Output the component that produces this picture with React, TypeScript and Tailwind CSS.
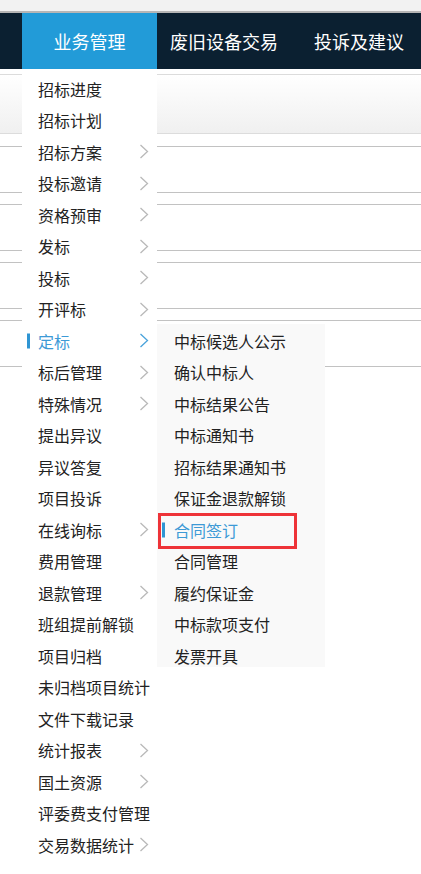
import React from 'react';

const font = '"Microsoft YaHei", "Noto Sans CJK SC", "Noto Sans", sans-serif';

type Item = { label: string; more?: boolean; active?: boolean };

const menu: Item[] = [
  { label: '招标进度' },
  { label: '招标计划' },
  { label: '招标方案', more: true },
  { label: '投标邀请', more: true },
  { label: '资格预审', more: true },
  { label: '发标', more: true },
  { label: '投标', more: true },
  { label: '开评标', more: true },
  { label: '定标', more: true, active: true },
  { label: '标后管理', more: true },
  { label: '特殊情况', more: true },
  { label: '提出异议' },
  { label: '异议答复' },
  { label: '项目投诉' },
  { label: '在线询标', more: true },
  { label: '费用管理' },
  { label: '退款管理', more: true },
  { label: '班组提前解锁' },
  { label: '项目归档' },
  { label: '未归档项目统计' },
  { label: '文件下载记录' },
  { label: '统计报表', more: true },
  { label: '国土资源', more: true },
  { label: '评委费支付管理' },
  { label: '交易数据统计', more: true },
];

const subMenu: Item[] = [
  { label: '中标候选人公示' },
  { label: '确认中标人' },
  { label: '中标结果公告' },
  { label: '中标通知书' },
  { label: '招标结果通知书' },
  { label: '保证金退款解锁' },
  { label: '合同签订', active: true },
  { label: '合同管理' },
  { label: '履约保证金' },
  { label: '中标款项支付' },
  { label: '发票开具' },
];

function Chevron({ active }: { active?: boolean }) {
  return (
    <svg width="10" height="15" viewBox="0 0 10 15" className="shrink-0">
      <polyline
        points="1.5,1 8.5,7.5 1.5,14"
        fill="none"
        stroke={active ? '#4aa3db' : '#b9b9b9'}
        strokeWidth="1.3"
      />
    </svg>
  );
}

function MenuRow({ item, sub }: { item: Item; sub?: boolean }) {
  return (
    <div className={`relative flex h-[31.5px] items-center ${sub ? 'pl-[17px]' : 'pl-[16px] pr-[8px]'}`}>
      {item.active && (
        <span className={`absolute top-1/2 h-[15px] w-[3px] -translate-y-1/2 bg-[#2f95d3] ${sub ? 'left-[5px]' : 'left-[5px]'}`} />
      )}
      <span
        className={`flex-1 whitespace-nowrap text-[16px] leading-none ${item.active ? 'text-[#3d9ad6]' : 'text-[#222]'}`}
      >
        {item.label}
      </span>
      {item.more && <Chevron active={item.active} />}
    </div>
  );
}

function Band() {
  return <div className="h-[47px] border-y border-[#c2c2c2]" />;
}

export default function App() {
  return (
    <div className="relative h-[874px] w-[421px] overflow-hidden bg-white" style={{ fontFamily: font }}>
      {/* 顶部 */}
      <div className="h-[11px] bg-[#f2f2f2]" />
      <div className="h-[2px] bg-[#b6b6b6]" />
      <nav className="flex h-[56px] items-center bg-[#0b2031] text-[18px] text-white">
        <div className="w-[22px]" />
        <div className="flex h-full w-[135px] items-center justify-center bg-[#229bd8]">业务管理</div>
        <span className="ml-[13px] whitespace-nowrap">废旧设备交易</span>
        <span className="ml-[36px] whitespace-nowrap">投诉及建议</span>
      </nav>

      {/* 页面内容 */}
      <div className="h-[5px]" />
      <div className="h-[60px] border-y border-[#dcdcdc] bg-gradient-to-b from-white to-[#f0f0f0]" />
      <div className="mt-[12px] flex flex-col gap-[11px]">
        <Band />
        <Band />
        <Band />
        <Band />
      </div>

      {/* 下拉菜单 */}
      <div className="absolute left-[22px] top-[69px] bottom-0 w-[135px] bg-white pt-[4px]">
        {menu.map((m) => (
          <MenuRow key={m.label} item={m} />
        ))}
      </div>

      {/* 二级菜单 */}
      <div className="absolute left-[157px] top-[324px] h-[343px] w-[168px] overflow-hidden bg-[#f9f9f9] pt-[1px]">
        {subMenu.map((m) => (
          <MenuRow key={m.label} item={m} sub />
        ))}
      </div>

      {/* 标注框 */}
      <div className="absolute left-[158px] top-[513px] h-[36px] w-[139px] border-[3px] border-[#ee3338]" />
    </div>
  );
}
